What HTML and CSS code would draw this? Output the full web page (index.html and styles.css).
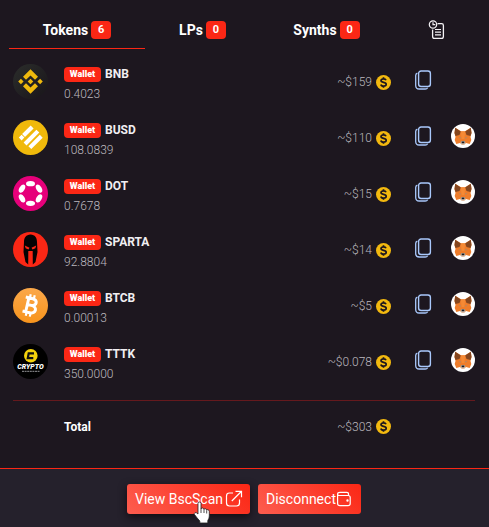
FILE: index.html
```html
<!DOCTYPE html>
<html lang="en">
<head>
<meta charset="utf-8">
<meta name="viewport" content="width=device-width, initial-scale=1">
<title>Wallet</title>
<link rel="stylesheet" href="styles.css">
</head>
<body>
<svg class="sprite" aria-hidden="true">
  <symbol id="coin" viewBox="0 0 15 15">
    <circle cx="7.500" cy="7.500" r="7.500" fill="#f3b90f"/>
    <path d="M10 5.300C9.700 4.300 8.800 3.900 7.500 3.900C6 3.900 5 4.500 5 5.600C5 8.200 10.200 6.600 10.200 9.300C10.200 10.500 9.100 11.200 7.600 11.200C6.100 11.200 5.100 10.600 4.900 9.500M7.500 2.200V4M7.500 11V12.800" fill="none" stroke="#1d171f" stroke-width="1.700"/>
  </symbol>
  <symbol id="copy" viewBox="0 0 18 20">
    <rect x="4.600" y="1" width="11.800" height="15.500" rx="2.500" fill="none" stroke="#a9c8fb" stroke-width="1.400"/>
    <path d="M3.400 3.200C2.200 3.600 1.700 4.300 1.700 5.600V15.500Q1.700 19 5.200 19H11.200C12.500 19 13.200 18.600 13.600 17.800" fill="none" stroke="#a9c8fb" stroke-width="1.300"/>
  </symbol>
  <symbol id="fox" viewBox="0 0 24 24">
    <circle cx="12" cy="12" r="12" fill="#fff"/>
    <path d="M4.200 3.700L10 7.200H14L19.800 3.700L20.500 9L19.500 13L20.300 16L18.700 20L15 18.900L13.300 20.500H10.700L9 18.900L5.300 20L3.700 16L4.500 13L3.500 9Z" fill="#ee7d2b"/>
    <path d="M4.200 3.700L9.800 7.500L8.500 11L4.500 12L3.500 9ZM19.800 3.700L14.200 7.500L15.500 11L19.500 12L20.500 9Z" fill="#84461f"/>
    <path d="M9.800 7.500H14.200L13.300 15H10.700Z" fill="#f58a35"/>
    <path d="M7.500 12.800L10 13.600L9.500 14.800ZM16.500 12.800L14 13.600L14.500 14.800Z" fill="#a98a70"/>
    <path d="M9.500 18.700L10.300 17H13.700L14.500 18.700L13.300 20.500H10.700Z" fill="#c9bdb2"/>
    <path d="M10.500 17.500H13.500L13.200 19.200H10.800Z" fill="#1c1a1d"/>
  </symbol>
</svg>

<main class="panel">
  <nav class="tabs">
    <button class="tab tab-active" type="button">Tokens <span class="badge">6</span></button>
    <button class="tab" type="button">LPs <span class="badge">0</span></button>
    <button class="tab" type="button">Synths <span class="badge">0</span></button>
    <button class="tab" type="button" aria-label="Transactions">
      <svg class="tab-icon" width="18" height="20" viewBox="0 0 18 20" fill="none" stroke="#f4f2f5">
        <circle cx="5" cy="4.500" r="3.700" stroke-width="1.200"/>
        <path d="M5 2.300V4.700H7.300" stroke-width="1.200"/>
        <path d="M9.500 3.600H13.600Q15.400 3.600 15.400 5.400V16.400Q15.400 18.300 13.500 18.300H6.500Q4.600 18.300 4.600 16.400V9.500" stroke-width="1.300"/>
        <path d="M7 9.500H13M7 12.200H13M7 14.900H13" stroke-width="1.200"/>
      </svg>
    </button>
  </nav>

  <table class="assets">
    <colgroup><col class="col-logo"><col><col><col class="col-copy"><col class="col-add"></colgroup>
    <tbody>
      <tr>
        <td><svg class="logo" viewBox="0 0 35 35"><defs><linearGradient id="bnb" x1="0" y1="0" x2="1" y2="1"><stop offset="0" stop-color="#2b2d2b"/><stop offset="1" stop-color="#19151a"/></linearGradient></defs><circle cx="17.500" cy="17.500" r="17.500" fill="url(#bnb)"/><g fill="#efb90d"><path d="M17.500 5.300L25 12.800L22 15.800L17.500 11.400L13 15.800L10 12.800ZM10 22.200L13 19.200L17.500 23.600L22 19.200L25 22.200L17.500 29.700ZM17.500 14.700L20.300 17.500L17.500 20.300L14.700 17.500ZM7.900 14.800L10.600 17.500L7.900 20.200L5.200 17.500ZM27.100 14.800L29.800 17.500L27.100 20.200L24.400 17.500Z"/></g></svg></td>
        <td><div class="name"><span class="tag">Wallet</span> BNB</div><div class="amount">0.4023</div></td>
        <td><div class="value">~$159 <svg class="coin"><use href="#coin"/></svg></div></td>
        <td><button class="icon-btn" type="button" aria-label="Copy BNB address"><svg class="copy"><use href="#copy"/></svg></button></td>
        <td></td>
      </tr>
      <tr>
        <td><svg class="logo" viewBox="0 0 35 35"><circle cx="17.500" cy="17.500" r="17.500" fill="#f0b90b"/><g fill="#fff"><path d="M17.700 5.500L20.600 8.400L12 17L9.100 14.100ZM23.400 9.700L26.300 12.600L13.500 25.400L10.600 22.500ZM26.800 14.800L29.700 17.700L18.300 29.100L15.400 26.200ZM8.600 14.800L11.400 17.600L8.600 20.400L5.800 17.600Z"/></g></svg></td>
        <td><div class="name"><span class="tag">Wallet</span> BUSD</div><div class="amount">108.0839</div></td>
        <td><div class="value">~$110 <svg class="coin"><use href="#coin"/></svg></div></td>
        <td><button class="icon-btn" type="button" aria-label="Copy BUSD address"><svg class="copy"><use href="#copy"/></svg></button></td>
        <td><button class="icon-btn" type="button" aria-label="Add BUSD to MetaMask"><svg class="fox"><use href="#fox"/></svg></button></td>
      </tr>
      <tr>
        <td><svg class="logo" viewBox="0 0 35 35"><circle cx="17.500" cy="17.500" r="17.500" fill="#e6007a"/><g fill="#fff"><ellipse cx="17.500" cy="7.700" rx="4.500" ry="2.600"/><ellipse cx="17.500" cy="27.300" rx="4.500" ry="2.600"/><ellipse cx="9" cy="12.600" rx="4.500" ry="2.600" transform="rotate(-60 9 12.600)"/><ellipse cx="26" cy="22.400" rx="4.500" ry="2.600" transform="rotate(-60 26 22.400)"/><ellipse cx="26" cy="12.600" rx="4.500" ry="2.600" transform="rotate(60 26 12.600)"/><ellipse cx="9" cy="22.400" rx="4.500" ry="2.600" transform="rotate(60 9 22.400)"/></g></svg></td>
        <td><div class="name"><span class="tag">Wallet</span> DOT</div><div class="amount">0.7678</div></td>
        <td><div class="value">~$15 <svg class="coin"><use href="#coin"/></svg></div></td>
        <td><button class="icon-btn" type="button" aria-label="Copy DOT address"><svg class="copy"><use href="#copy"/></svg></button></td>
        <td><button class="icon-btn" type="button" aria-label="Add DOT to MetaMask"><svg class="fox"><use href="#fox"/></svg></button></td>
      </tr>
      <tr>
        <td><svg class="logo" viewBox="0 0 35 35"><circle cx="17.500" cy="17.500" r="17.500" fill="#fb2715"/><path d="M17.500 2.500C22 2.800 24 5.500 24 10L24.500 20L22.500 30L19.800 32.500L19.700 19H15.300L15.200 32.500L12.500 30L10.500 20L11 10C11 5.500 13 2.800 17.500 2.500Z" fill="#050304"/><path d="M11.800 13.500L16.500 15.800L15.500 17.500L12.600 16.300ZM23.200 13.500L18.500 15.800L19.500 17.500L22.400 16.300Z" fill="#fb2715"/></svg></td>
        <td><div class="name"><span class="tag">Wallet</span> SPARTA</div><div class="amount">92.8804</div></td>
        <td><div class="value">~$14 <svg class="coin"><use href="#coin"/></svg></div></td>
        <td><button class="icon-btn" type="button" aria-label="Copy SPARTA address"><svg class="copy"><use href="#copy"/></svg></button></td>
        <td><button class="icon-btn" type="button" aria-label="Add SPARTA to MetaMask"><svg class="fox"><use href="#fox"/></svg></button></td>
      </tr>
      <tr>
        <td><svg class="logo" viewBox="0 0 35 35"><defs><linearGradient id="btc" x1="0" y1="0" x2="0" y2="1"><stop offset="0" stop-color="#fba84a"/><stop offset="1" stop-color="#f7941d"/></linearGradient></defs><circle cx="17.500" cy="17.500" r="17.500" fill="url(#btc)"/><g transform="rotate(13 17.500 17.500)" fill="none" stroke="#fff"><path d="M14.200 10.300V24.700M11 10.300H18.300C23.800 10.300 23.800 17.200 18.300 17.200H14.200M18.300 17.200C25 17.200 25 24.700 18.300 24.700H11" stroke-width="3"/><path d="M15.200 6.500V10M19.300 6.500V10M15.200 25V28.500M19.300 25V28.500" stroke-width="2.200"/></g></svg></td>
        <td><div class="name"><span class="tag">Wallet</span> BTCB</div><div class="amount">0.00013</div></td>
        <td><div class="value">~$5 <svg class="coin"><use href="#coin"/></svg></div></td>
        <td><button class="icon-btn" type="button" aria-label="Copy BTCB address"><svg class="copy"><use href="#copy"/></svg></button></td>
        <td><button class="icon-btn" type="button" aria-label="Add BTCB to MetaMask"><svg class="fox"><use href="#fox"/></svg></button></td>
      </tr>
      <tr>
        <td><svg class="logo" viewBox="0 0 35 35"><circle cx="17.500" cy="17.500" r="17.500" fill="#000"/><circle cx="17.800" cy="11.700" r="6.800" fill="#f4d20c"/><path d="M21 9.300H15.700L14.800 14.200H20.300" fill="none" stroke="#111" stroke-width="2.200"/><text class="logo-title" x="17.500" y="24.500" text-anchor="middle">CRYPTO</text><path d="M9 27.300H26.500" stroke="#77777a" stroke-width="1.200" stroke-dasharray="2 .6"/></svg></td>
        <td><div class="name"><span class="tag">Wallet</span> TTTK</div><div class="amount">350.0000</div></td>
        <td><div class="value">~$0.078 <svg class="coin"><use href="#coin"/></svg></div></td>
        <td><button class="icon-btn" type="button" aria-label="Copy TTTK address"><svg class="copy"><use href="#copy"/></svg></button></td>
        <td><button class="icon-btn" type="button" aria-label="Add TTTK to MetaMask"><svg class="fox"><use href="#fox"/></svg></button></td>
      </tr>
    </tbody>
    <tfoot>
      <tr>
        <td></td>
        <th scope="row">Total</th>
        <td><div class="value">~$303 <svg class="coin"><use href="#coin"/></svg></div></td>
        <td></td>
        <td></td>
      </tr>
    </tfoot>
  </table>
</main>

<footer class="actions">
  <a class="btn btn-hover" href="#bscscan">View BscScan
    <svg class="link-icon" width="18" height="18" viewBox="0 0 18 18" fill="none" stroke="#fff" stroke-width="1.200"><path d="M8 3H4.500Q1.500 3 1.500 6V13Q1.500 16 4.500 16H11.500Q14.500 16 14.500 13V9.500M10.500 1.300H16.500V7.300M16.300 1.500L6.800 11"/></svg>
    <svg class="pointer" width="18" height="23" viewBox="0 0 18 23"><path d="M5 2.500Q5 1 6.500 1T8 2.500V8Q8.200 6.900 9.500 7T11 8.500Q11.300 7.500 12.400 7.700T13.700 9.200Q14 8.500 15 8.700T16.300 10.300V15Q16.300 17.500 14.800 19.500V22H6.800V20Q4 17 1.500 13.500Q.8 12.300 2 11.700T5 13Z" fill="#fff" stroke="#222" stroke-width=".8"/><path d="M8 8V12M11 8.700V12M13.700 9.500V12.500" stroke="#222" stroke-width=".8"/></svg>
  </a>
  <button class="btn" type="button">Disconnect<svg width="16" height="16" viewBox="0 0 16 16" fill="none" stroke="#fff" stroke-width="1.200"><path d="M12.500 4.500V3Q12.500 1.300 10.800 1.300H4Q1.600 1.300 1.600 3T4 4.500H12Q14.200 4.500 14.200 6.500V12.500Q14.200 14.700 12 14.700H4Q1.600 14.700 1.600 12.500V3"/><circle cx="11.500" cy="9.500" r=".6" fill="#fff"/></svg></button>
</footer>
</body>
</html>
```

FILE: styles.css
```css
* {
  box-sizing: border-box;
}

body {
  margin: 0;
  min-height: 100vh;
  display: flex;
  flex-direction: column;
  background: #1d171f;
  color: #fff;
  font-family: Roboto, "Liberation Sans", sans-serif;
  font-size: 12px;
}

button {
  font: inherit;
  color: inherit;
  border: 0;
  padding: 0;
  background: none;
  cursor: pointer;
}

svg {
  display: block;
  flex: none;
}

.sprite {
  position: absolute;
  width: 0;
  height: 0;
}

.panel {
  padding: 11px 14px 0 13px;
}

.tabs {
  display: grid;
  grid-template-columns: 136fr 115fr 133fr 87fr;
  margin: 0 -5px 0 -4px;
}

.tab {
  display: flex;
  align-items: center;
  justify-content: center;
  gap: 3px;
  height: 38px;
  border-bottom: 1px solid transparent;
  font-size: 14px;
  font-weight: 700;
}

.tab-active {
  border-bottom-color: #fb2715;
}

.badge {
  width: 20px;
  height: 18px;
  border-radius: 4px;
  background: #fb2715;
  font-size: 11px;
  line-height: 18px;
  text-align: center;
}

.assets {
  width: 100%;
  margin-top: 4px;
  border-collapse: collapse;
  table-layout: fixed;
}

.assets td,
.assets th {
  height: 56px;
  padding: 0;
  text-align: left;
  vertical-align: middle;
}

.assets td:nth-child(2) {
  padding-top: 6px;
}

.assets tbody td:nth-child(3) {
  padding-top: 2px;
}

.assets td:nth-child(n + 4) {
  padding-bottom: 2px;
}

.assets tfoot td,
.assets tfoot th {
  height: 52px;
}

.col-logo {
  width: 51px;
}

.col-copy {
  width: 48px;
}

.col-add {
  width: 36px;
}

.logo {
  width: 35px;
  height: 35px;
}

.logo-title {
  fill: #fff;
  font-size: 7px;
  font-style: italic;
  font-weight: 900;
}

.name {
  display: flex;
  align-items: center;
  gap: 4px;
  height: 20px;
  font-weight: 700;
  color: #f1eff2;
}

.tag {
  width: 37px;
  height: 15px;
  border-radius: 4px;
  background: #fb2715;
  color: #fff;
  font-size: 9px;
  font-weight: 900;
  line-height: 15px;
  text-align: center;
}

.amount {
  height: 20px;
  line-height: 20px;
  font-weight: 300;
  color: #bcb8be;
}

.value {
  display: flex;
  align-items: center;
  justify-content: flex-end;
  gap: 4px;
  font-weight: 300;
  color: #bcb8be;
}

.coin {
  width: 15px;
  height: 15px;
}

.icon-btn {
  display: block;
  margin-left: auto;
}

.copy {
  width: 18px;
  height: 20px;
  margin-right: 7px;
}

.fox {
  width: 24px;
  height: 24px;
}

.assets tfoot tr {
  border-top: 1px solid #65191d;
}

.assets tbody::after {
  content: "";
  display: block;
  height: 11px;
}

.actions {
  flex: 1;
  display: flex;
  justify-content: center;
  align-items: flex-start;
  gap: 8px;
  margin-top: 15px;
  padding: 15px 9px 12px 8px;
  border-top: 1px solid #fb2715;
  background: #25212c;
}

.btn {
  display: flex;
  align-items: center;
  height: 30px;
  padding: 0 9px 0 8px;
  border-radius: 3px;
  background: linear-gradient(45deg, #fd5d4f, #fb2715);
  color: #fff;
  font-size: 14px;
  text-decoration: none;
}

.btn-hover {
  position: relative;
  gap: 2px;
  padding-right: 7px;
  box-shadow: 0 3px 8px #100c12;
}

.pointer {
  position: absolute;
  left: 66px;
  top: 17px;
}
```
